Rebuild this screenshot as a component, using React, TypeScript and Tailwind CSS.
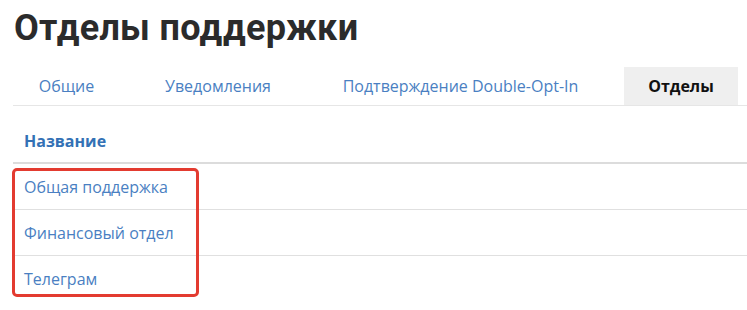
import React from "react";

const tabs = [
  { label: "Общие", w: "w-[107px]" },
  { label: "Уведомления", w: "w-[158px]" },
  { label: "Подтверждение Double-Opt-In", w: "w-[289px]" },
];

const rows = ["Общая поддержка", "Финансовый отдел", "Телеграм"];

export default function App() {
  return (
    <div className="w-[747px] h-[310px] bg-white overflow-hidden pl-[13px] font-['Open_Sans',sans-serif]">
      <h1 className="pt-[4px] h-[67px] text-[36px] leading-[48px] font-bold text-[#2b2b2b] pl-[1px] tracking-[0.3px] font-['Roboto',sans-serif]">
        Отделы поддержки
      </h1>
      <div className="flex gap-[19px] border-b border-[#e6e6e6] h-[39px]">
        {tabs.map((t) => (
          <div
            key={t.label}
            className={`${t.w} flex items-center justify-center text-[16px] text-[#4a7fc2]`}
          >
            {t.label}
          </div>
        ))}
        <div className="w-[114px] flex items-center justify-center bg-[#efefef] text-[16px] font-bold text-[#111]">
          Отделы
        </div>
      </div>
      <div className="mt-[13px] h-[45px] flex items-center border-b-2 border-[#dcdcdc] pl-[11px] text-[16px] font-bold text-[#3371b5]">
        Название
      </div>
      <div className="relative">
        {rows.map((r, i) => (
          <div
            key={r}
            className={`h-[46px] flex items-center pl-[11px] text-[16px] text-[#4a7fc2] ${i < rows.length - 1 ? "border-b border-[#e0e0e0]" : ""}`}
          >
            {r}
          </div>
        ))}
        <div className="absolute left-[-1px] top-[4px] w-[187px] h-[129px] border-[3px] border-[#e33b30] rounded-[5px] pointer-events-none" />
      </div>
    </div>
  );
}
